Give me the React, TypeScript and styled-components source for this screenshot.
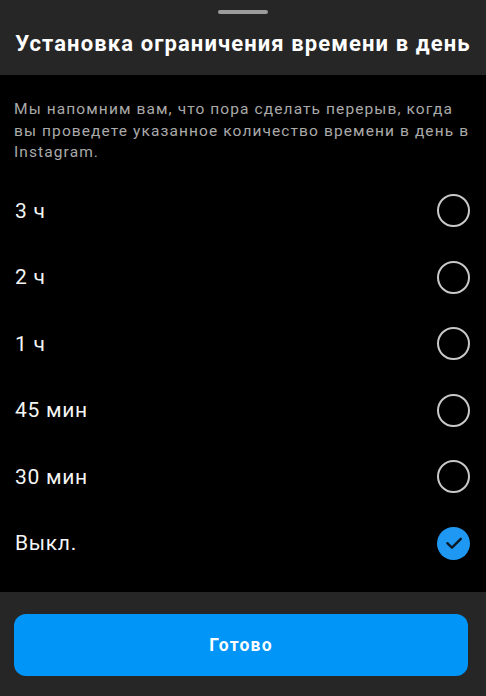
import styled, { createGlobalStyle } from "styled-components"

const options = ["3 ч", "2 ч", "1 ч", "45 мин", "30 мин", "Выкл."]
const selected = "Выкл."

export default function App() {
  return (
    <>
      <GlobalStyle />
      <Sheet>
        <Header>
          <Handle />
          <Title>Установка ограничения времени в день</Title>
        </Header>
        <Body>
          <Description>
            Мы напомним вам, что пора сделать перерыв, когда
            <br />
            вы проведете указанное количество времени в день в
            <br />
            Instagram.
          </Description>
          <List>
            {options.map((o) => (
              <Row key={o}>
                <Label>{o}</Label>
                {o === selected ? (
                  <Checked>
                    <svg width="20" height="20" viewBox="0 0 20 20">
                      <path d="M3.3 10.2 L8 14.6 L16.8 5.8" fill="none" stroke="#0d1a26" strokeWidth="2.4" strokeLinecap="round" strokeLinejoin="round" />
                    </svg>
                  </Checked>
                ) : (
                  <Radio />
                )}
              </Row>
            ))}
          </List>
        </Body>
        <Footer>
          <DoneButton>Готово</DoneButton>
        </Footer>
      </Sheet>
    </>
  )
}

const GlobalStyle = createGlobalStyle`
  html, body {
    margin: 0;
    padding: 0;
    background: #000;
  }
  body {
    font-family: Roboto, "Noto Sans", sans-serif;
    -webkit-font-smoothing: antialiased;
  }
`

const Sheet = styled.div`
  width: 486px;
  height: 696px;
  display: flex;
  flex-direction: column;
  background: #000;
  color: #fff;
  overflow: hidden;
`

const Header = styled.header`
  height: 75px;
  flex-shrink: 0;
  background: #262626;
  display: flex;
  flex-direction: column;
  align-items: center;
  padding-top: 10px;
  box-sizing: border-box;
`

const Handle = styled.div`
  width: 50px;
  height: 4px;
  border-radius: 2px;
  background: #9c9c9c;
`

const Title = styled.h1`
  margin: 17px 0 0;
  font-size: 22px;
  font-weight: 700;
  letter-spacing: 1.1px;
  line-height: 26px;
  color: #fff;
  white-space: nowrap;
`

const Body = styled.main`
  flex: 1;
  display: flex;
  flex-direction: column;
  padding: 24px 14px 0 15px;
`

const Description = styled.p`
  margin: 0 0 0 -1px;
  font-size: 15.5px;
  letter-spacing: 1.1px;
  line-height: 21.5px;
  color: #aaaaaa;
  white-space: nowrap;
`

const List = styled.ul`
  list-style: none;
  margin: 14px 0 0;
  padding: 0;
`

const Row = styled.li`
  height: 66.5px;
  display: flex;
  align-items: center;
  justify-content: space-between;
`

const Label = styled.span`
  font-size: 21px;
  letter-spacing: 0.7px;
  color: #f5f5f5;
`

const Radio = styled.span`
  width: 33px;
  height: 33px;
  box-sizing: border-box;
  border-radius: 50%;
  border: 2.5px solid #c8c8c8;
  margin-right: 2px;
`

const Checked = styled.span`
  width: 33px;
  height: 33px;
  border-radius: 50%;
  background: #1e98f3;
  margin-right: 2px;
  display: flex;
  align-items: center;
  justify-content: center;
`

const Footer = styled.footer`
  height: 104px;
  flex-shrink: 0;
  background: #262626;
  padding: 22px 18px 20px 14px;
  box-sizing: border-box;
  display: flex;
`

const DoneButton = styled.button`
  flex: 1;
  border: none;
  border-radius: 12px;
  background: #0095f6;
  color: #fff;
  font-family: Roboto, "Noto Sans", sans-serif;
  font-size: 17.5px;
  font-weight: 700;
  letter-spacing: 1.2px;
`
